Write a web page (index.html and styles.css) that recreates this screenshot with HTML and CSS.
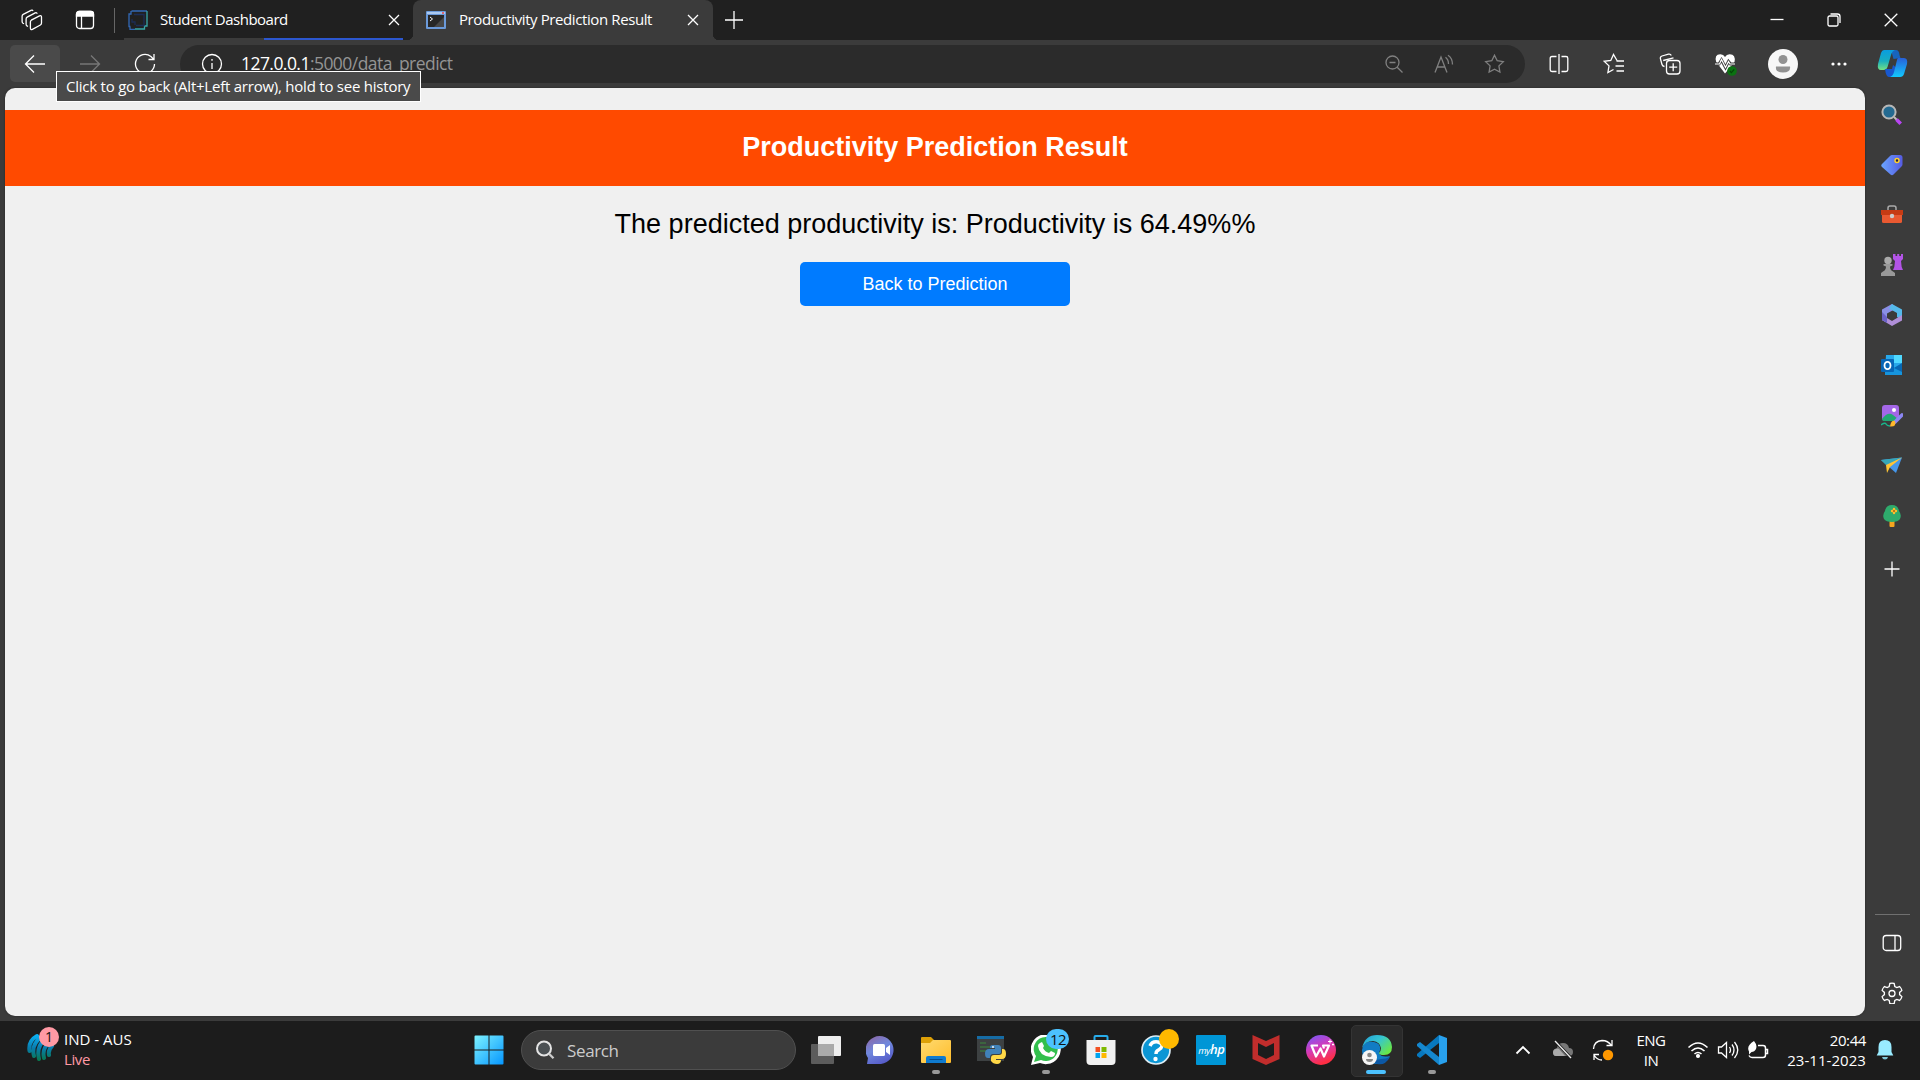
FILE: index.html
```html
<!DOCTYPE html>
<html lang="en">
<head>
<meta charset="utf-8">
<title>Productivity Prediction Result</title>
<link rel="stylesheet" href="styles.css">
</head>
<body>
<div class="desktop">
  <header class="tabstrip">
    <svg class="ic workspaces" width="22" height="22" viewBox="0 0 22 22"><path d="M10.300 11.200l8.200-4.300q2-.8 2 1.200v6q0 1.300-1.100 1.900l-8 4.300q-2 .8-2-1.200v-6q0-1.300.9-1.900zM7 17.500l-1-.6q-.9-.6-.9-1.700V10q0-1.300 1.100-1.900l8-4.200q1.500-.7 2 .9M3 14.800l-1-.6q-.9-.6-.9-1.700V7.300q0-1.300 1.100-1.900L10 1.300q1.500-.7 2 .7"/></svg>
    <svg class="ic vtabs" width="20" height="20" viewBox="0 0 20 20"><rect x="1.500" y="1.500" width="17" height="17" rx="3"/><path d="M1.500 4q0-2.500 2.500-2.500h12q2.500 0 2.500 2.500v2h-17z" fill="#fff"/><path d="M6.500 6v12.500"/></svg>
    <i class="sep"></i>
    <div class="tab">
      <svg width="20" height="20" viewBox="0 0 20 20" fill="none" stroke-width="1.300"><path d="M3.500 1H19M3 1v3H1v12.500h1.500M2 17v2.300h5" stroke="#3268b5"/><path d="M19 1v15h-2.500v3H7" stroke="#38a8a8"/><path d="M6 4.500h10v11H8M4 9v3h3v3" stroke="#1c2c55"/></svg>
      <span class="t1">Student Dashboard</span>
      <svg class="ic close" width="12" height="12" viewBox="0 0 12 12"><path d="M1 1l10 10M11 1L1 11"/></svg>
    </div>
    <div class="tab active">
      <svg width="20" height="18" viewBox="0 0 20 18"><rect width="20" height="18" rx="1" fill="#6b9ada"/><path d="M1 1h18v2H1z" fill="#abc9ef"/><path d="M16 1h2v2h-2z" fill="#dd6670"/><rect x="2" y="4" width="16" height="12" fill="#272727"/><path d="M18 6v10H8z" fill="#484848"/><path d="M4 6l2.500 2L4 10" stroke="#fff" fill="none"/></svg>
      <span class="t2">Productivity Prediction Result</span>
      <svg class="ic close" width="12" height="12" viewBox="0 0 12 12"><path d="M1 1l10 10M11 1L1 11"/></svg>
    </div>
    <svg class="ic plus" width="18" height="18" viewBox="0 0 18 18"><path d="M9 0v18M0 9h18"/></svg>
    <div class="winctl">
      <svg class="ic" width="14" height="14" viewBox="0 0 14 14"><path d="M.5 6.500h13"/></svg>
      <svg class="ic" width="14" height="14" viewBox="0 0 14 14"><rect x="1" y="3" width="10" height="10" rx="1.500"/><path d="M3.500 1h7q2.500 0 2.500 2.500V10"/></svg>
      <svg class="ic" width="14" height="14" viewBox="0 0 14 14"><path d="M.7.700l12.600 12.600M13.300.700L.7 13.300"/></svg>
    </div>
  </header>

  <nav class="toolbar">
    <button class="nav back"><svg class="ic" width="22" height="20" viewBox="0 0 22 20"><path d="M21 10H1.500M10 1.500L1.500 10l8.500 8.500"/></svg></button>
    <button class="nav fwd"><svg class="ic" width="22" height="20" viewBox="0 0 22 20"><path d="M1 10h19.500M12 1.500l8.500 8.500-8.500 8.500"/></svg></button>
    <button class="nav reload"><svg class="ic" width="22" height="22" viewBox="0 0 22 22"><path d="M20.500 11a9.500 9.500 0 1 1-3.600-7.500L20 6.500M20 1v5.500h-5.500"/></svg></button>
    <div class="address">
      <svg class="ic info" width="22" height="22" viewBox="0 0 22 22"><circle cx="11" cy="11" r="9.500"/><path d="M11 10v6M11 6v1.800"/></svg>
      <span class="url"><b>127.0.0.1</b>:5000/data_predict</span>
      <div class="addr-icons">
        <svg class="ic" width="20" height="20" viewBox="0 0 20 20"><circle cx="8.500" cy="8.500" r="6.500"/><path d="M5.500 8.500h6M13.200 13.200l5.300 5.300"/></svg>
        <svg class="ic" width="20" height="20" viewBox="0 0 20 20"><path d="M1 18.500L7 3l6 15.500M3.200 13h7.600M11.500 3.200q3 2.300 3 6.800M14 1.200q4.500 3 4.500 9.300"/></svg>
        <svg class="ic" width="21" height="20" viewBox="0 0 20 20"><path d="M10 1.200l2.700 5.500 6.100.9-4.400 4.300 1 6.100L10 15.200 4.600 18l1-6.100-4.400-4.300 6.100-.9z"/></svg>
      </div>
    </div>
    <div class="actions">
      <svg class="ic" width="20" height="22" viewBox="0 0 20 22"><path d="M10 1v20M7.500 3.500H3q-1.800 0-1.800 1.800v11.400q0 1.800 1.800 1.800h4.500M12.500 3.500H17q1.800 0 1.800 1.800v11.400q0 1.800-1.800 1.800h-4.500"/></svg>
      <svg class="ic" width="22" height="22" viewBox="0 0 22 22"><path d="M14 7.500L10.500 1.500 7.800 7.500 1.200 8.300 6 12.900 4.900 19.500 10.500 16.500M13.500 8H21M12.500 13H21M13.500 18H21"/></svg>
      <svg class="ic" width="22" height="22" viewBox="0 0 22 22"><path d="M5.500 13.500q-2-.2-2.500-2L1.400 5.600Q1 3.600 3 3l6.500-1.800q2-.4 2.800 1.300M4.200 7.500l10.300-2.700"/><rect x="7.500" y="7.500" width="13.500" height="13.500" rx="3" fill="#3b3b3b"/><path d="M14.200 10.200v8M10.200 14.200h8"/></svg>
      <svg class="ic" width="24" height="24" viewBox="0 0 24 24"><path d="M2.200 10Q0 2 6.500 2.200 9.500 2.500 11 5q1.500-2.500 4.500-2.800Q22 2 20.500 10L11 21.500z" fill="#fff" stroke="none"/><path d="M0 12h5l2.500-4 4 7.500 3-6 2 2.500H22" stroke="#3b3b3b" stroke-width="3"/><path d="M1 12h4.500l2-4.500 4 8 3-6 1.500 2.500h5" stroke-width="1.200"/><circle cx="18" cy="19" r="4.800" fill="#0b7211" stroke="none"/><path d="M15.800 19l1.600 1.600 2.800-3.200" stroke="#06440a"/></svg>
      <svg class="avatar" width="30" height="30" viewBox="0 0 30 30"><circle cx="15" cy="15" r="15" fill="#f7f7f7"/><circle cx="15" cy="10.500" r="4.500" fill="#919191"/><path d="M8 17.500h14q1 6-7 6t-7-6z" fill="#919191"/></svg>
      <svg class="dots" width="18" height="6" viewBox="0 0 18 6" fill="#fff"><circle cx="3" cy="3" r="1.600"/><circle cx="9" cy="3" r="1.600"/><circle cx="15" cy="3" r="1.600"/></svg>
      <svg class="copilot" width="31" height="29" viewBox="0 0 31 29"><defs><linearGradient id="ca" x2="0" y2="1"><stop stop-color="#099de0"/><stop offset=".55" stop-color="#18adc0"/><stop offset="1" stop-color="#73e183"/></linearGradient><linearGradient id="cb" x2="0" y2="1"><stop stop-color="#2860d8"/><stop offset="1" stop-color="#12c9ff"/></linearGradient></defs><path d="M14 1h5q3 0 3.500 5l1 3-7 1z" fill="#1764bd"/><path d="M7 1h11q-3 1-4 5l-3.500 12q-1 3-4 3H4q-4 0-3-6L4 4q1-3 3-3z" fill="url(#ca)"/><path d="M8 20h7l1-4 6 5-4 7h-6q-3 0-4-8z" fill="#1858cf"/><path d="M21 9h6q4 0 3 6l-3 10q-1 3-4 3H13q3-1 4-5l3-12q.4-1.500 1-2z" fill="url(#cb)"/></svg>
    </div>
  </nav>

  <div class="middle">
    <main class="page">
      <h1>Productivity Prediction Result</h1>
      <p><span>The predicted productivity is: Productivity is 64.49%%</span></p>
      <a class="btn"><span>Back to Prediction</span></a>
    </main>
    <aside class="sidebar">
      <svg viewBox="0 0 22 22"><path d="M13 13l3 3" stroke="#bbb" stroke-width="2"/><path d="M15.500 15.500l4.200 4.200" stroke="#b845f2" stroke-width="3.600"/><circle cx="8" cy="8" r="6.600" fill="#246a91" stroke="#b7b7b7" stroke-width="2"/></svg>
      <svg viewBox="0 0 22 22"><defs><linearGradient id="tg" x2="1"><stop stop-color="#6aa5ff"/><stop offset="1" stop-color="#565be2"/></linearGradient></defs><path d="M11 1h8q2.500 0 2.500 2.500v7q0 1-1 2l-8 8q-1.500 1.500-3 0L1 13q-1.500-1.500 0-3l8-8q1-1 2-1z" fill="url(#tg)"/><circle cx="16" cy="6.500" r="2" fill="#224" stroke="#ffd02d" stroke-width="1.500"/></svg>
      <svg viewBox="0 0 22 22"><path d="M7 6V4q0-2 2-2h4q2 0 2 2v2" fill="none" stroke="#aaa" stroke-width="1.500"/><rect x="1" y="6" width="20" height="13" rx="1.500" fill="#e95931"/><path d="M0 6h22v5H0z" fill="#c63b14"/><circle cx="11" cy="12" r="2.200" fill="#ccc"/></svg>
      <svg viewBox="0 0 22 22"><path d="M12 0h2.500v2h1.700V0h2v2H20V0h2v5l-2 2 .7 6 1.300 3H12l1.300-3 .7-6-2-2z" fill="#b354e7"/><circle cx="7" cy="6.500" r="3.700" fill="#aaa"/><path d="M2.500 10h9v1.500L9 12.500q0 3.500 3 5l2 1.500v3H0v-3l2-1.500q3-1.500 3-5l-2.500-1z" fill="#999"/></svg>
      <svg viewBox="0 0 22 22"><path d="M11 0L1 5.500V16l5 2.500V9.500L16 4z" fill="#8a8fe6"/><path d="M11 0l10 5.500V16l-5-3V9L8 4.500z" fill="#55b9ea"/><path d="M1 12.500V16l10 6 10-5.500V11l-10 6-5-3z" fill="#b08fd8"/><path d="M1 8v8l5 3v-6z" fill="#6b63c8"/></svg>
      <svg viewBox="0 0 22 22"><path d="M5 1h16v18H4z" fill="#28a8ea"/><path d="M13 1h8v8h-8z" fill="#50d9ff"/><path d="M4 18l17-8v11H4z" fill="#1694dd"/><path d="M13 14l8-5v9z" fill="#0868b4"/><rect y="5" width="13" height="13" rx="1" fill="#0866b6"/><ellipse cx="6.500" cy="11.500" rx="3" ry="3.700" fill="none" stroke="#fff" stroke-width="1.800"/></svg>
      <svg viewBox="0 0 22 22"><rect x="1" width="17" height="16" rx="3" fill="#a467e8"/><path d="M1 14q6-8 11-4l5 4q-1 2-3 2H4q-3 0-3-2z" fill="#22a873"/><circle cx="13" cy="5" r="2" fill="#fff"/><path d="M21 10l-7 7" stroke="#8b86f4" stroke-width="3.600" stroke-linecap="round"/><path d="M14 16q2 6-5 5.500 1-7 5-5.500" fill="#ffb72b"/><path d="M0 20q4-3 5-1t4 2" fill="none" stroke="#1ab48a" stroke-width="1.500"/></svg>
      <svg viewBox="0 0 22 22"><path d="M0 5l21-2.500L15 18z" fill="#4597eb"/><path d="M0 5l21-2.500L5 10z" fill="#36a7b8"/><path d="M5 10L21 2.500 9 12l-3 6z" fill="#ffc534"/></svg>
      <svg viewBox="0 0 22 22"><rect x="8.500" y="14" width="5" height="8" rx="1" fill="#f5a620"/><path d="M11 0q6 0 7 6 3 4 1 8-2 3-8 3t-8-3q-2-4 1-8 1-6 7-6z" fill="#2eab6c"/><path d="M13 4v4M11 6h4" stroke="#ffbd2d" stroke-width="2.400" stroke-linecap="round"/><circle cx="13" cy="6" r="1" fill="#a36213"/></svg>
      <svg class="ic add" viewBox="0 0 22 22"><path d="M11 3.500v15M3.500 11h15"/></svg>
      <i class="rule"></i>
      <svg class="ic" viewBox="0 0 22 22"><rect x="2.200" y="3.500" width="17.500" height="15" rx="3"/><path d="M14 3.500v15"/></svg>
      <svg class="ic" viewBox="0 0 22 22"><path d="M8.800 1.500q2.200-.6 4.400 0l.6 3 2 1.100 2.900-1q1.600 1.600 2.200 3.800l-2.300 2v2.200l2.300 2q-.6 2.200-2.200 3.800l-2.900-1-2 1.100-.6 3q-2.200.6-4.400 0l-.6-3-2-1.100-2.900 1q-1.600-1.600-2.200-3.800l2.300-2v-2.200l-2.300-2q.6-2.200 2.200-3.800l2.900 1 2-1.100z"/><circle cx="11" cy="11.500" r="3"/></svg>
    </aside>
  </div>

  <footer class="taskbar">
    <div class="widget">
      <div class="wicon"><svg width="28" height="30" viewBox="0 0 28 30"><defs><linearGradient id="wg" gradientUnits="userSpaceOnUse" x1="0" y1="2" x2="0" y2="28"><stop stop-color="#0ab2f5"/><stop offset=".5" stop-color="#087cad"/><stop offset="1" stop-color="#08784b"/></linearGradient></defs><g fill="none" stroke="url(#wg)" stroke-width="4" stroke-linecap="round"><path d="M2.500 18Q1 8 10 3M7 23Q4 12 14 4M12 26Q9 14 18 6M17 25Q15 16 21 11M22 22q-1-5 3-9"/></g></svg><em class="badge pink">1</em></div>
      <div class="wtext"><span>IND - AUS</span><span class="live">Live</span></div>
    </div>
    <div class="apps">
      <div class="app"><svg width="30" height="30" viewBox="0 0 30 30"><defs><linearGradient id="win" x2="1" y2="1"><stop stop-color="#7df2ff"/><stop offset="1" stop-color="#0596ff"/></linearGradient></defs><path d="M1.500.500H14.500v14H.5v-13q0-1 1-1zM15.500 .500h13q1 0 1 1v13h-14zM.5 15.500h14v14h-13q-1 0-1-1zM15.500 15.500h14v13q0 1-1 1h-13z" fill="url(#win)"/></svg></div>
      <div class="search"><svg width="20" height="20" viewBox="0 0 20 20"><circle cx="9" cy="8.500" r="7" fill="#4b5053" stroke="#e4e4e4" stroke-width="2"/><path d="M14 13.700l4.500 4.500" stroke="#ccc" stroke-width="2.300"/></svg><span>Search</span></div>
      <div class="app"><svg width="30" height="30" viewBox="0 0 30 30"><rect x="7" y="1" width="23" height="20" rx="1" fill="#eee"/><rect y="9" width="23" height="20" rx="1" fill="#5c5c5c"/><path d="M7 9h16v12H7z" fill="#aaa"/></svg></div>
      <div class="app"><svg width="30" height="30" viewBox="0 0 30 30"><defs><linearGradient id="ch" x1=".2" x2=".7" y2="1"><stop stop-color="#8a68a8"/><stop offset=".45" stop-color="#7088dd"/><stop offset="1" stop-color="#5458c8"/></linearGradient></defs><path d="M1 29l1-6A14 14 0 1 1 15 29z" fill="url(#ch)"/><rect x="7" y="9" width="12" height="12" rx="1.500" fill="#fff"/><path d="M20 13l4-3v10l-4-3z" fill="#fff"/></svg></div>
      <div class="app"><svg width="30" height="30" viewBox="0 0 30 30"><defs><linearGradient id="fo" x2="1" y2="1"><stop stop-color="#ffda70"/><stop offset="1" stop-color="#ffbd2b"/></linearGradient></defs><path d="M0 3q0-1 1-1h9l4 4v5H0z" fill="#dda007"/><path d="M12 5h17q1 0 1 1v21q0 1-1 1H1q-1 0-1-1V8h9z" fill="url(#fo)"/><path d="M5 28v-5q0-2 2-2h16q2 0 2 2v5z" fill="#0f7bd0"/><path d="M8.500 24.500h13" stroke="#064d8e"/></svg><i class="run"></i></div>
      <div class="app"><svg width="30" height="30" viewBox="0 0 30 30"><path d="M1 1h27v25H1z" fill="#3d4142"/><path d="M1 1h27v3H1z" fill="#166ca5"/><path d="M4 8h6M4 12h10M4 16h6" stroke="#3d8a3c"/><path d="M17 10h5q3 0 3 3v4q0 2-3 2h-5q-3 0-3 4h-2q-3 0-3-4.500t4-4.500h6v-1h-5v-1q0-2 3-2z" fill="#4182b9"/><path d="M26 14h1q3 0 3 5t-4 5h-6v1h5q0 4-4 4t-6-3v-3q0-3 3-3h5q3 0 3-3z" fill="#ffd847"/><circle cx="17" cy="12" r=".9" fill="#fff"/></svg></div>
      <div class="app"><svg width="30" height="30" viewBox="0 0 30 30"><path d="M0 30l2-8A15 15 0 1 1 9 28z" fill="#fff"/><path d="M3 27l2-6A12 12 0 1 1 10 25z" fill="#32bf4c"/><path d="M9 8l2-1 2 4-1 2q2 4 6 5l2-2 4 2q0 4-4 4-12-1-13-11 0-2 2-3z" fill="#fff"/></svg><em class="badge blue">12</em><i class="run"></i></div>
      <div class="app"><svg width="30" height="32" viewBox="0 0 30 32"><path d="M8.500 7V3q0-1 1-1h11q1 0 1 1v4" fill="none" stroke="#27aceb" stroke-width="2"/><path d="M.5 6h29v21q0 4-4 4h-21q-4 0-4-4z" fill="#f1f1f1"/><path d="M9.500 13H14v5H9.500z" fill="#f25022"/><path d="M15.500 13h5v5h-5z" fill="#7fba00"/><path d="M9.500 19H14v5H9.500z" fill="#00a4ef"/><path d="M15.500 19h5v5h-5z" fill="#ffb900"/></svg></div>
      <div class="app"><svg width="30" height="30" viewBox="0 0 30 30"><circle cx="15" cy="15" r="14" fill="#0b96d5" stroke="#dcecf4" stroke-width="1.700"/><path d="M9 11q2-5 8-4 6 2 3 6-1 1-4 3-1 1-1 3" fill="none" stroke="#fff" stroke-width="3.500"/><circle cx="14.500" cy="24" r="2.200" fill="#fff"/></svg><em class="badge amber"></em></div>
      <div class="app"><div class="hp">my<b>hp</b></div></div>
      <div class="app"><svg width="30" height="30" viewBox="0 0 30 30"><path d="M1.500 0L15 6 28.500 0v24L15 30 1.500 24zM7 8v12l8 4 8-4V8l-8 4z" fill="#c12d2c" fill-rule="evenodd"/></svg></div>
      <div class="app"><svg width="30" height="30" viewBox="0 0 30 30"><defs><linearGradient id="wp" x2=".4" y2="1"><stop stop-color="#715cff"/><stop offset=".5" stop-color="#d33bba"/><stop offset="1" stop-color="#ff2e43"/></linearGradient></defs><circle cx="15" cy="15" r="15" fill="url(#wp)"/><path d="M12 10.500H5.500L10 21.500l4.500-8 3.500 8 5-11h-6l1 3" fill="none" stroke="#fff" stroke-width="2.200" stroke-linejoin="round"/><path d="M24 4.500v4M22 6.500h4M27 8.500v2M26 9.500h2" stroke="#fff"/></svg></div>
      <div class="app focus"><svg width="30" height="30" viewBox="0 0 30 30"><defs><linearGradient id="ed" x2="1" y2=".7"><stop stop-color="#229ed9"/><stop offset=".5" stop-color="#35c5d1"/><stop offset="1" stop-color="#6ae744"/></linearGradient></defs><path d="M0 15Q1 5 12 7q7 1 6 8l-1 3q2 5 11 3-4 8-12 8Q0 29 0 15z" fill="#117cc4"/><path d="M0 13Q3 0 15 0q14 0 15 12 0 8-8 8-5 0-5-2 2-2 2-5-1-6-8-7Q3 6 0 13z" fill="url(#ed)"/><path d="M10 15q-2 12 9 9 5 0 9-2-5 9-13 7-8-3-5-14z" fill="#0c58a5"/><circle cx="7.500" cy="22.500" r="7.500" fill="#f6f6f6"/><circle cx="7.500" cy="20" r="2.300" fill="#888"/><path d="M4 24h7q0 3-3.500 3T4 24z" fill="#888"/></svg><i class="run on"></i></div>
      <div class="app"><svg width="30" height="30" viewBox="0 0 30 30"><path d="M22 0v8L3 23l-3-2v-2z" fill="#0878be"/><path d="M3 7L0 9v2l22 19v-8z" fill="#1587ce"/><path d="M22 0l8 3v24l-8 3z" fill="#28a1ee"/></svg><i class="run"></i></div>
    </div>
    <div class="tray">
      <svg class="ic chev" width="16" height="10" viewBox="0 0 16 10"><path d="M1.500 8.500L8 2l6.500 6.500" stroke-width="1.800"/></svg>
      <svg class="cloud" width="22" height="20" viewBox="0 0 22 20"><path d="M4 16q-3 0-3-4 0-3 4-4 1-5 6-5t6 5q4 0 4 4t-4 4z" fill="#777"/><path d="M1 12q1-4 6-3l6 7H4q-3 0-3-4z" fill="#aaa"/><path d="M3 1l16 17" stroke="#1c1c1c" stroke-width="3"/><path d="M3 1l16 17" stroke="#eee" stroke-width="1.300"/></svg>
      <svg class="ic sync" width="22" height="22" viewBox="0 0 22 22"><path d="M1.500 10Q2 2 10 1.500q6 0 9.500 5M20 1v5.500h-5.500M10 21q-5 0-8-5M2 21v-5.500h5"/><circle cx="16" cy="16" r="5.200" fill="#ff9800" stroke="none"/></svg>
      <div class="lang"><span>ENG</span><span>IN</span></div>
      <svg class="ic wifi" width="22" height="18" viewBox="0 0 22 18"><path d="M1.500 6.500q9.500-9 19 0M4.500 10q6.500-6 13 0M7.500 13q3.500-3 7 0" stroke-width="1.600"/><circle cx="11" cy="15" r="1.400" fill="#fff"/></svg>
      <svg class="ic vol" width="22" height="20" viewBox="0 0 22 20"><path d="M1.500 7H4.500L9.500 2.500v15L4.500 13h-3zM12.500 7q2 3 0 6M15 4.500q4 5.500 0 11M17.500 2q6.500 8 0 16"/></svg>
      <svg class="ic batt" width="22" height="18" viewBox="0 0 22 18"><path d="M11 4.500h5q2.500 0 2.500 2.500v7q0 2.500-2.500 2.500H5q-2 0-3-2M19 8.500h1.500v4H19" stroke-width="1.500"/><path d="M7 0q3.500 4 2 8-1.500 3-4.500 3L2 13.500v-3Q-1 5 7 0z" fill="#fff" stroke="none"/></svg>
      <div class="clock"><span>20:44</span><span class="date">23-11-2023</span></div>
      <svg class="bell" width="18" height="20" viewBox="0 0 18 20"><path d="M9 0q6.500 0 6.500 7v5l1.800 3.500H.7L2.500 12V7Q2.500 0 9 0z" fill="#99ebff"/><path d="M6 17h6q-.5 2.500-3 2.500T6 17z" fill="#7fc6d8"/></svg>
    </div>
  </footer>
  <div class="tooltip"><span>Click to go back (Alt+Left arrow), hold to see history</span></div>
</div>
</body>
</html>
```
FILE: styles.css
```css
* { box-sizing: border-box; }
body { margin: 0; font-family: "Open Sans", "Noto Sans", sans-serif; color: #fff; }
svg { display: block; flex: none; }
.ic { fill: none; stroke: #fff; stroke-width: 1.3; }
.desktop { position: relative; width: 1920px; height: 1080px; overflow: hidden; display: flex; flex-direction: column; background: #3b3b3b; }

.tabstrip { height: 40px; background: #202020; display: flex; align-items: center; padding-left: 21px; }
.vtabs { margin-left: 32px; }
.sep { width: 1px; height: 25px; background: #666; margin: 0 9px 0 19px; }
.tab { height: 40px; width: 289px; display: flex; align-items: center; padding: 0 13px 0 4px; font-size: 15px; white-space: nowrap; background: linear-gradient(90deg, #3b3b3b 140px, #2c57cf 140px, #2c57cf 279px, transparent 279px) bottom / 100% 2px no-repeat; }
.tab span { margin-left: 12px; padding-bottom: 2px; }
.tab .close { margin-left: auto; }
.tab.active { position: relative; width: 300px; background: #3b3b3b; border-radius: 8px 8px 0 0; padding: 0 14px 0 13px; }
.tab.active::before, .tab.active::after { content: ""; position: absolute; bottom: 0; width: 6px; height: 6px; }
.tab.active::before { left: -6px; background: radial-gradient(circle at 0 0, transparent 6px, #3b3b3b 6.5px); }
.tab.active::after { right: -6px; background: radial-gradient(circle at 100% 0, transparent 6px, #3b3b3b 6.5px); }
.tab.active span { margin-left: 13px; }
.t1 { letter-spacing: -0.5px; }
.t2 { letter-spacing: -0.4px; }
.plus { margin-left: 12px; }
.winctl { margin-left: auto; display: flex; gap: 43px; padding-right: 22px; }

.toolbar { height: 48px; display: flex; align-items: center; padding: 0 12px 1px 10px; }
.nav { width: 50px; height: 37px; border: 0; border-radius: 5px; padding: 0; background: none; display: flex; align-items: center; justify-content: center; }
.back { background: #4a4a4a; }
.fwd { margin-left: 5px; }
.fwd .ic { stroke: #777; }
.reload { margin-left: 5px; }
.address { margin-left: 10px; width: 1345px; height: 38px; border-radius: 19px; background: #2b2b2b; display: flex; align-items: center; padding: 0 20px 0 21px; }
.url { margin-left: 18px; padding-bottom: 2px; font-size: 17.5px; letter-spacing: -0.55px; color: #949494; white-space: nowrap; }
.url b { font-weight: 400; color: #fff; }
.addr-icons { margin-left: auto; display: flex; gap: 30px; }
.addr-icons .ic { stroke: #808080; }
.actions { flex: 1; display: flex; align-items: center; padding-left: 24px; }
.actions .ic { margin-right: 34px; }
.actions .ic:nth-child(3) { margin-right: 33px; }
.actions .ic:nth-child(4) { margin-right: 30px; }
.dots { margin-left: 32px; }
.copilot { margin-left: auto; }

.middle { height: 933px; display: flex; }
.page { width: 1860px; height: 928px; margin-left: 5px; background: #f0f0f0; border-radius: 10px; padding-top: 22px; font-family: "Liberation Sans", Arial, sans-serif; color: #000; display: flex; flex-direction: column; align-items: center; box-shadow: 0 0 2px #222; }
.page h1 { margin: 0; width: 100%; height: 76px; line-height: 75px; background: #ff4a00; color: #fff; font-size: 27px; text-align: center; }
.page p { margin: 20px 0 0; height: 36px; line-height: 36px; font-size: 27px; white-space: nowrap; }
.btn { margin-top: 20px; width: 270px; height: 44px; line-height: 44px; text-align: center; border-radius: 5px; background: #007bff; color: #fff; font-size: 18px; }
.sidebar { width: 55px; display: flex; flex-direction: column; align-items: center; padding: 16px 1px 0 0; }
.sidebar svg { width: 22px; height: 22px; margin-bottom: 28.1px; }
.sidebar .add { margin-top: 3px; }
.sidebar .rule { width: 35px; height: 1px; background: #707070; margin: auto 0 17px; }
.sidebar .rule ~ svg:last-child { margin-bottom: 17px; }

.taskbar { height: 59px; background: #1c1c1c; display: flex; font-size: 15px; }
.widget { width: 461px; display: flex; padding: 12px 0 0 27px; }
.wicon { position: relative; width: 28px; }
.badge { position: absolute; height: 20px; border-radius: 10px; font-style: normal; font-size: 14px; line-height: 20px; text-align: center; color: #111; }
.pink { width: 20px; left: 12px; top: -6px; background: #ff99a4; }
.blue { width: 23px; left: 28px; top: 8px; background: #4cc2ff; letter-spacing: -0.5px; font-size: 15px; }
.amber { width: 20px; left: 30px; top: 8px; background: #ffb900; }
.wtext { margin-left: 9px; display: flex; flex-direction: column; line-height: 20px; margin-top: -4px; }
.live { color: #ff99a4; letter-spacing: -0.4px; }
.apps { display: flex; }
.app { position: relative; width: 55.1px; height: 58px; display: flex; align-items: center; justify-content: center; }
.app svg, .hp { position: relative; }
.app.focus::before { content: ""; position: absolute; left: 2px; top: 4px; width: 50px; height: 50px; border-radius: 5px; background: #2a2a2a; border: 1px solid #343434; }
.run { position: absolute; bottom: 5px; left: 24px; width: 8px; height: 4px; border-radius: 2px; background: #999; }
.run.on { left: 17px; width: 20px; background: #4cc2ff; }
.search { margin: 9px 2px 0 5px; width: 275px; height: 40px; border-radius: 20px; background: #3b3b3b; border: 1px solid #505050; display: flex; align-items: center; padding-left: 13px; font-size: 17px; color: #ccc; }
.search span { margin-left: 12px; letter-spacing: -0.4px; }
.hp { width: 30px; height: 30px; background: #0096d6; border-radius: 1px; font: italic 9.5px/28px "Open Sans", sans-serif; text-align: center; letter-spacing: -0.5px; }
.hp b { font-size: 13px; font-weight: 600; }
.tray { margin-left: auto; height: 57px; display: flex; align-items: center; padding-right: 26px; }
.cloud { margin-left: 21px; }
.sync { margin-left: 18px; }
.lang, .clock { display: flex; flex-direction: column; line-height: 20px; }
.lang { width: 30px; margin-left: 22px; align-items: center; letter-spacing: -0.5px; }
.wifi { margin-left: 21px; }
.vol { margin-left: 8px; }
.batt { margin-left: 8px; }
.clock { width: 97px; align-items: flex-end; letter-spacing: -0.4px; }
.date { letter-spacing: 0.05px; }
.bell { margin-left: 10px; }

.tooltip { position: absolute; left: 56px; top: 71px; width: 365px; height: 31px; background: #4a4a4a; border: 1px solid #fff; font-size: 15px; line-height: 29px; padding-left: 9px; letter-spacing: -0.23px; white-space: nowrap; }
```
